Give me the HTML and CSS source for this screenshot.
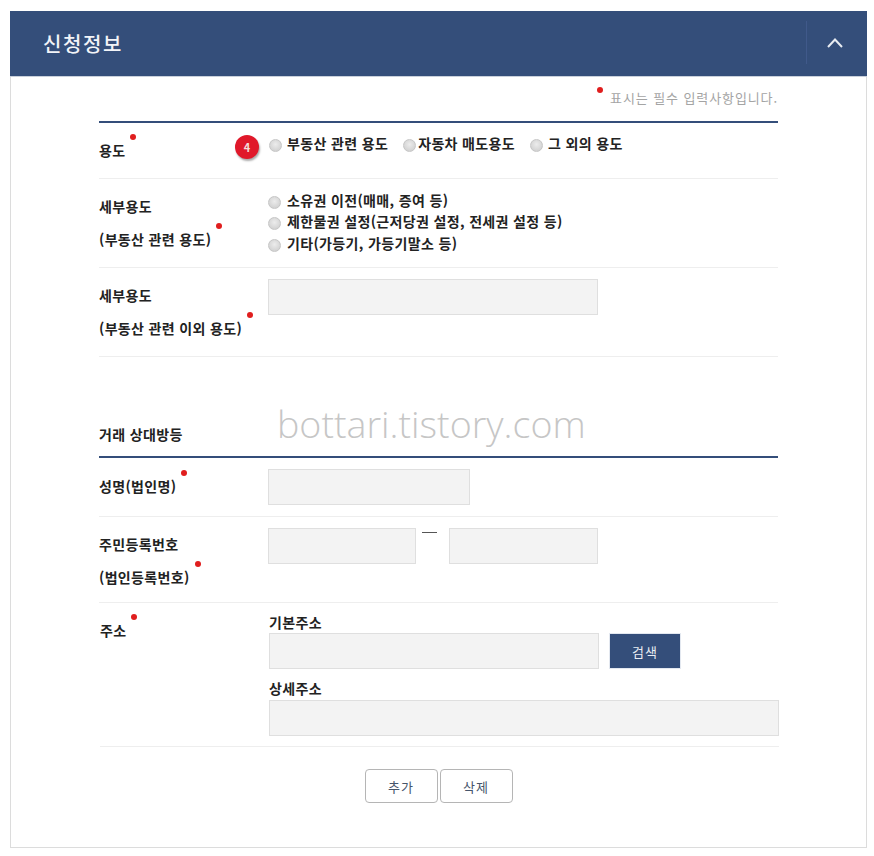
FILE: index.html
```html
<!DOCTYPE html>
<html lang="ko">
<head>
  <meta charset="UTF-8" />
  <title>신청정보</title>
  <link rel="stylesheet" href="styles.css">
</head>
<body>

  <div class="panel">
    <div class="panel-head">
      <h1>신청정보</h1>
      <div class="toggle">
        <svg width="16" height="10" viewBox="0 0 16 10"><path d="M1 9L8 1.5L15 9" fill="none" stroke="#e8ecf2" stroke-width="2"/></svg>
      </div>
    </div>

    <div class="panel-body">
      <p class="note"><span class="note-dot"></span>표시는 필수 입력사항입니다.</p>

      <div class="rule"></div>

      <div class="row row-use">
        <div class="label"><span class="req">용도</span></div>
        <div class="field">
          <span class="badge">4</span>
          <div class="radio-line">
            <input type="radio" name="use"><label class="first">부동산 관련 용도</label>
            <input type="radio" name="use"><label>자동차 매도용도</label>
            <input type="radio" name="use"><label class="last">그 외의 용도</label>
          </div>
        </div>
      </div>

      <div class="row row-sub">
        <div class="label two-line">세부용도<br><span class="req">(부동산 관련 용도)</span></div>
        <div class="field radio-stack">
          <div class="radio-line"><input type="radio" name="sub"><label class="first">소유권 이전(매매, 증여 등)</label></div>
          <div class="radio-line"><input type="radio" name="sub"><label class="first">제한물권 설정(근저당권 설정, 전세권 설정 등)</label></div>
          <div class="radio-line"><input type="radio" name="sub"><label class="first">기타(가등기, 가등기말소 등)</label></div>
        </div>
      </div>

      <div class="row row-other">
        <div class="label two-line">세부용도<br><span class="req">(부동산 관련 이외 용도)</span></div>
        <div class="field"><input class="text w-330" type="text"></div>
      </div>

      <h2 class="sub-title">거래 상대방등</h2>
      <div class="rule"></div>

      <div class="row row-name">
        <div class="label"><span class="req">성명(법인명)</span></div>
        <div class="field"><input class="text w-202" type="text"></div>
      </div>

      <div class="row row-reg">
        <div class="label two-line">주민등록번호<br><span class="req">(법인등록번호)</span></div>
        <div class="field reg-field">
          <input class="text w-148" type="text">
          <span class="dash"></span>
          <input class="text w-149" type="text">
        </div>
      </div>

      <div class="row row-addr">
        <div class="label"><span class="req">주소</span></div>
        <div class="field">
          <div class="addr-title">기본주소</div>
          <div class="addr-line">
            <input class="text w-330" type="text">
            <button class="btn-search" type="button">검색</button>
          </div>
          <div class="addr-title second">상세주소</div>
          <input class="text w-510" type="text">
        </div>
      </div>

      <div class="actions">
        <button class="btn" type="button">추가</button>
        <button class="btn" type="button">삭제</button>
      </div>
    </div>

    <div class="watermark">bottari.tistory.com</div>
  </div>

</body>
</html>
```

FILE: styles.css
```css
* { box-sizing: border-box; }
html, body { margin: 0; padding: 0; background: #fff; }
body { font-family: "Noto Sans CJK KR", "Liberation Sans", sans-serif; color: #222; height: 856px; overflow: hidden; }

.panel { position: relative; width: 857px; margin: 11px 0 0 10px; }

.panel-head { height: 66px; background: #344e7a; display: flex; justify-content: space-between; align-items: center; border-bottom: 1px solid #c9d0db; }
.panel-head h1 { margin: 0 0 0 33px; font-size: 20px; font-weight: 500; color: #f2f4f8; letter-spacing: 1.6px; line-height: 60px; }
.toggle { width: 61px; height: 43px; margin-top: -2px; border-left: 1px solid #40598a; display: flex; align-items: center; justify-content: center; padding-right: 4px; }

.panel-body { height: 771px; padding: 0 88px; border: 1px solid #dcdcdc; border-top: 0; }

.note { margin: 0; height: 44px; padding-top: 10px; text-align: right; font-size: 13px; line-height: 20px; color: #a4a4a4; letter-spacing: 0.9px; }
.note-dot { display: inline-block; width: 6px; height: 6px; margin-right: 7px; border-radius: 50%; background: #e01e1e; vertical-align: 10px; }

.rule { height: 2px; background: #344e7a; }

.row { display: grid; grid-template-columns: 169px 1fr; border-bottom: 1px solid #eee; }
.row-use { height: 56px; }
.row-sub { height: 89px; }
.row-other { height: 89px; padding-top: 11px; }
.row-name { height: 59px; padding-top: 11px; }
.row-reg { height: 86px; padding-top: 11px; }
.row-addr { height: 144px; margin-left: 1px; margin-right: -1px; }

.label { font-size: 14px; font-weight: 700; letter-spacing: 0.35px; line-height: 33px; }
.row-use .label { padding-top: 11px; }
.row-sub .label { padding-top: 11px; }
.row-name .label { padding-top: 1px; }
.row-addr .label { padding-top: 11px; }

.req { position: relative; white-space: nowrap; }
.req::after { content: ""; position: absolute; right: -11px; top: -6px; width: 6px; height: 6px; border-radius: 50%; background: #e01e1e; }

.field { position: relative; }
.row-use .field { padding-top: 9px; }
.radio-stack { padding-top: 10px; }

.radio-line { display: flex; align-items: center; height: 21.5px; font-size: 14px; font-weight: 700; letter-spacing: 0.35px; white-space: nowrap; }
.radio-line input { appearance: none; width: 13px; height: 13px; margin: 5px 0 0 0; flex: none; border-radius: 50%; border: 1px solid #c6c6c6; background: radial-gradient(circle at 50% 40%, #ececec, #cacaca); }
.row-use .radio-line { padding-left: 1px; }
.radio-line label { margin: 0 15px 0 2px; }
.radio-line label.first { margin-left: 6px; }
.row-use .radio-line label.first { margin-left: 5px; }
.radio-line label.last { margin-left: 5px; }

.badge { position: absolute; left: -33px; top: 12px; width: 24px; height: 24px; border-radius: 50%; background: #e0182a; color: #f3dcdc; font-size: 11px; font-weight: 700; line-height: 24px; text-align: center; box-shadow: 1px 2px 2px #aaa; }

.text { display: block; height: 36px; padding: 0 6px; border: 1px solid #dfdfdf; background: #f3f3f3; border-radius: 0; }
.w-330 { width: 330px; }
.w-202 { width: 202px; }
.w-148 { width: 148px; }
.w-149 { width: 149px; }
.w-510 { width: 510px; }

.sub-title { margin: 0; height: 99px; padding-top: 65px; font-size: 14px; font-weight: 700; letter-spacing: 0.35px; line-height: 24px; }

.reg-field { display: flex; align-items: flex-start; }
.dash { width: 15px; height: 1px; margin: 4px 12px 0 6px; background: #555; }

.addr-title { height: 30px; padding-top: 8px; font-size: 14px; font-weight: 700; line-height: 22px; letter-spacing: 0.35px; }
.addr-title.second { height: 31px; padding-top: 8px; }
.addr-line { display: flex; align-items: center; }
.btn-search { width: 72px; height: 36px; margin-left: 10px; border: 1px solid #e3e8f0; background: #344e7a; color: #e9edf3; font-family: inherit; font-size: 13px; letter-spacing: 1px; }

.actions { display: flex; justify-content: center; gap: 2px; padding-top: 22px; }
.btn { width: 73px; height: 34px; border: 1px solid #b5b5b5; border-radius: 4px; background: #fff; color: #46556b; font-family: inherit; font-size: 13px; letter-spacing: 1px; padding: 0; }

.watermark { position: absolute; left: 267px; top: 388px; font-family: "Open Sans", sans-serif; font-weight: 300; font-size: 37.6px; line-height: 50px; color: #c6c6c6; white-space: nowrap; }
```
